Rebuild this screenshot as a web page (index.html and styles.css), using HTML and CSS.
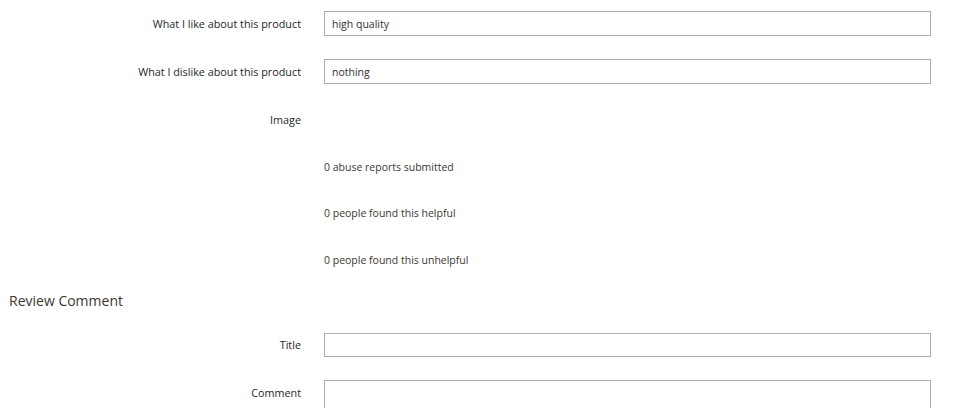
FILE: index.html
```html
<!DOCTYPE html>
<html>
<head>
<meta charset="utf-8">
<link rel="stylesheet" href="styles.css">
</head>
<body>
<div class="page">
  <div class="fieldset">
    <div class="row row-input">
      <label class="label">What I like about this product</label>
      <div class="control"><input class="input" type="text" value="high quality"></div>
    </div>
    <div class="row row-input">
      <label class="label">What I dislike about this product</label>
      <div class="control"><input class="input" type="text" value="nothing"></div>
    </div>
    <div class="row row-text row-image">
      <label class="label">Image</label>
      <div class="control"></div>
    </div>
    <div class="row row-text">
      <div class="label"></div>
      <div class="control note">0 abuse reports submitted</div>
    </div>
    <div class="row row-text">
      <div class="label"></div>
      <div class="control note">0 people found this helpful</div>
    </div>
    <div class="row row-text">
      <div class="label"></div>
      <div class="control note">0 people found this unhelpful</div>
    </div>
  </div>
  <h2 class="legend">Review Comment</h2>
  <div class="fieldset">
    <div class="row row-input row-title">
      <label class="label">Title</label>
      <div class="control"><input class="input" type="text" value=""></div>
    </div>
    <div class="row row-area">
      <label class="label">Comment</label>
      <div class="control"><textarea class="textarea"></textarea></div>
    </div>
  </div>
</div>
</body>
</html>
```

FILE: styles.css
```css
html, body {
  margin: 0;
  padding: 0;
  background: #ffffff;
}
body {
  font-family: "Open Sans", "Liberation Sans", sans-serif;
  color: #303030;
  overflow: hidden;
}
.page {
  padding: 11px 22px 0 0;
  width: 931px;
}
.fieldset {
  display: flex;
  flex-direction: column;
}
.row {
  display: flex;
  align-items: flex-start;
  gap: 23px;
}
.row-input {
  height: 25px;
  margin-bottom: 23px;
}
.row-title {
  height: 24px;
}
.row-text {
  height: 25px;
  margin-bottom: 21.5px;
}
.row-image {
  margin-bottom: 22.5px;
}
.label {
  flex: 0 0 301px;
  text-align: right;
  font-size: 10.8px;
  font-weight: 400;
  line-height: 25px;
  color: #262626;
}
.control {
  flex: 1 1 auto;
  min-width: 0;
}
.note {
  font-size: 10.5px;
  line-height: 25px;
  color: #41362f;
}
.input {
  box-sizing: border-box;
  display: block;
  width: 100%;
  height: 25px;
  margin: 0;
  border: 1px solid #adadad;
  border-radius: 0;
  padding: 0 8px 0 7px;
  font-family: "Open Sans", "Liberation Sans", sans-serif;
  font-size: 10.5px;
  color: #303030;
  background: #fff;
  outline: none;
}
.row-title .input {
  height: 24px;
}
.row-title .label {
  line-height: 24px;
}
.legend {
  margin: -3px 0 22px 9px;
  font-size: 14px;
  font-weight: 400;
  line-height: 20px;
  color: #41362f;
}
.row-area {
  height: 60px;
}
.textarea {
  box-sizing: border-box;
  display: block;
  width: 100%;
  height: 60px;
  margin: 0;
  border: 1px solid #adadad;
  border-radius: 0;
  padding: 4px 7px;
  resize: none;
  background: #fff;
}
```
